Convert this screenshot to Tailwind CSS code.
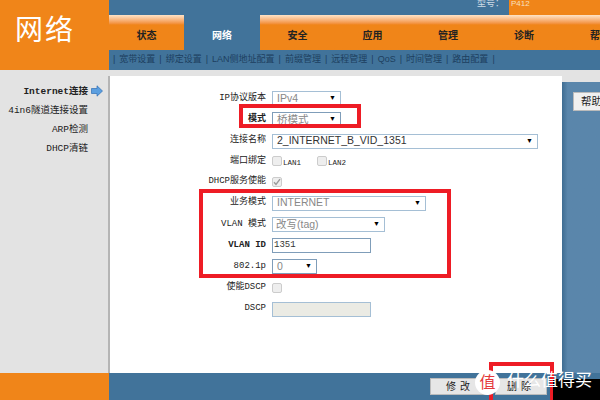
<!DOCTYPE html>
<html lang="zh">
  <head>
    <meta charset="UTF-8" />
    <title>网络</title>
    <script src="https://cdn.jsdelivr.net/npm/@tailwindcss/browser@4"></script>
  </head>
  <body class="relative w-[600px] h-[400px] overflow-hidden bg-white font-['Liberation_Sans','Noto_Sans_CJK_SC',sans-serif] text-[9px] text-[#222]">
    <!-- header -->
    <div class="flex h-[70px]">
      <div class="w-[109px] shrink-0 bg-[#f08519] text-white text-[28px] pl-[15px] pt-[13px] leading-[36px] tracking-[2px]">网络</div>
      <div class="w-[491px] overflow-hidden flex flex-col bg-[#41739a]">
        <div class="h-[15px] flex justify-end">
          <div class="text-[#cfdbe5] text-[9px] leading-[7px] pr-[5px]">型号：</div>
          <div class="w-[91px] bg-[#f08519] text-[#f8e0c0] text-[8px] leading-[7px] pl-[2px]">P412</div>
        </div>
        <div class="h-[35px] flex font-bold text-[10px] text-[#222]">
          <div class="w-[75px] shrink-0 bg-linear-to-b from-[#fde3c6] from-0% via-[#f08519] via-28% to-[#f08519] flex items-center justify-center pt-[6px]">状态</div>
          <div class="w-[76px] shrink-0 text-white flex items-center justify-center pt-[6px]">网络</div>
          <div class="w-[400px] shrink-0 flex bg-linear-to-b from-[#fde3c6] from-0% via-[#f08519] via-28% to-[#f08519]">
            <div class="w-[75px] flex items-center justify-center pt-[6px]">安全</div>
            <div class="w-[75px] flex items-center justify-center pt-[6px]">应用</div>
            <div class="w-[76px] flex items-center justify-center pt-[6px]">管理</div>
            <div class="w-[76px] flex items-center justify-center pt-[6px]">诊断</div>
            <div class="pl-[28px] flex items-center pt-[6px] whitespace-nowrap">帮助</div>
          </div>
        </div>
        <div class="h-[19px] flex items-center gap-[4px] pl-[4px] text-[9px] text-[#1d3f5f] whitespace-nowrap">
          <span>|</span><span>宽带设置</span><span>|</span><span>绑定设置</span><span>|</span><span>LAN侧地址配置</span><span>|</span><span>前缀管理</span><span>|</span><span>远程管理</span><span>|</span><span>QoS</span><span>|</span><span>时间管理</span><span>|</span><span>路由配置</span><span>|</span>
        </div>
      </div>
    </div>

    <div class="flex h-[303px] bg-[#e3e3e3] pt-[6px]">
      <!-- sidebar -->
      <div class="w-[110px] shrink-0 relative flex flex-col items-end pr-[20px] pt-[8px] gap-[4px] leading-[15px] text-[9.5px] font-['Liberation_Mono','Noto_Sans_CJK_SC',monospace] text-[#222] whitespace-nowrap border-r-2 border-[#b5b5b5]">
        <div class="font-bold">Internet连接</div>
        <div>4in6隧道连接设置</div>
        <div>ARP检测</div>
        <div>DHCP清链</div>
        <svg class="absolute right-[5px] top-[9px]" width="12" height="12" viewBox="0 0 12 12"><path d="M0.5 3.5H6V0.8L11.5 6L6 11.2V8.5H0.5Z" fill="#5b9fe0" stroke="#2f6fb5" stroke-width="0.7"/></svg>
      </div>

      <!-- form -->
      <div class="w-[452px] shrink-0 bg-white">
        <div class="flex flex-col pl-[34px] pt-[12px] font-['Liberation_Mono','Noto_Sans_CJK_SC',monospace]">
          <div class="flex items-center h-[21px]">
            <div class="w-[128px] text-right pr-[6px]">IP协议版本</div>
            <div class="w-[69px] h-[15px] flex items-center justify-between px-[4px] border border-[#a5bfd5] text-[#888] text-[10.5px] font-['Liberation_Sans','Noto_Sans_CJK_SC',sans-serif]">IPv4<span class="text-[7px] text-black">▼</span></div>
          </div>
          <div class="flex items-center h-[21px]">
            <div class="w-[128px] text-right pr-[6px] font-bold">模式</div>
            <div class="w-[69px] h-[15px] flex items-center justify-between px-[4px] border border-[#7f9db9] text-[#888] text-[10.5px] font-['Liberation_Sans','Noto_Sans_CJK_SC',sans-serif]">桥模式<span class="text-[7px] text-black">▼</span></div>
          </div>
          <div class="flex items-center h-[22px]">
            <div class="w-[128px] text-right pr-[6px]">连接名称</div>
            <div class="w-[266px] h-[15px] shrink-0 flex items-center justify-between px-[4px] border border-[#a5bfd5] text-[#333] text-[10.5px] font-['Liberation_Sans','Noto_Sans_CJK_SC',sans-serif]">2_INTERNET_B_VID_1351<span class="text-[7px] text-black">▼</span></div>
          </div>
          <div class="flex items-center h-[20px]">
            <div class="w-[128px] text-right pr-[6px]">端口绑定</div>
            <div class="w-[10px] h-[10px] -mt-[3px] rounded-[2px] border border-[#ccc] bg-[#eee]"></div>
            <div class="w-[35px] text-[7.5px] pt-[4px] pl-[1px]">LAN1</div>
            <div class="w-[10px] h-[10px] -mt-[3px] rounded-[2px] border border-[#ccc] bg-[#eee]"></div>
            <div class="text-[7.5px] pt-[4px] pl-[1px]">LAN2</div>
          </div>
          <div class="flex items-center h-[20px]">
            <div class="w-[128px] text-right pr-[6px]">DHCP服务使能</div>
            <div class="w-[10px] h-[10px] rounded-[2px] border border-[#ccc] bg-[#eee] flex items-center justify-center">
              <svg width="8" height="8" viewBox="0 0 8 8"><path d="M1 4.2L3 6.5L7 1.2" fill="none" stroke="#999" stroke-width="1.4"/></svg>
            </div>
          </div>
          <div class="flex items-center h-[22px]">
            <div class="w-[128px] text-right pr-[6px]">业务模式</div>
            <div class="w-[154px] h-[15px] flex items-center justify-between px-[4px] border border-[#a5bfd5] text-[#888] text-[10.5px] font-['Liberation_Sans','Noto_Sans_CJK_SC',sans-serif]">INTERNET<span class="text-[7px] text-black">▼</span></div>
          </div>
          <div class="flex items-center h-[21px]">
            <div class="w-[128px] text-right pr-[6px]">VLAN 模式</div>
            <div class="w-[113px] h-[15px] flex items-center justify-between px-[3px] pr-[4px] border border-[#a5bfd5] text-[#888] text-[10.5px] font-['Liberation_Sans','Noto_Sans_CJK_SC',sans-serif]">改写(tag)<span class="text-[7px] text-black">▼</span></div>
          </div>
          <div class="flex items-center h-[21px]">
            <div class="w-[128px] text-right pr-[6px] font-bold">VLAN ID</div>
            <div class="w-[99px] h-[15px] flex items-center px-[1px] border border-[#7f9db9] text-[#333] text-[9px]">1351</div>
          </div>
          <div class="flex items-center h-[21px]">
            <div class="w-[128px] text-right pr-[6px]">802.1p</div>
            <div class="w-[45px] h-[15px] flex items-center justify-between px-[4px] border border-[#7f9db9] text-[#888] text-[10.5px] font-['Liberation_Sans','Noto_Sans_CJK_SC',sans-serif]">0<span class="text-[7px] text-black">▼</span></div>
          </div>
          <div class="flex items-center h-[21px]">
            <div class="w-[128px] text-right pr-[6px]">使能DSCP</div>
            <div class="w-[10px] h-[10px] rounded-[2px] border border-[#ccc] bg-[#eee]"></div>
          </div>
          <div class="flex items-center h-[22px]">
            <div class="w-[128px] text-right pr-[6px]">DSCP</div>
            <div class="w-[99px] h-[15px] border border-[#a5bfd5] bg-[#ebebe4]"></div>
          </div>
        </div>
      </div>

      <!-- right panel -->
      <div class="w-[38px] shrink-0 overflow-hidden mt-[6px] bg-linear-to-r from-[#3f6d92] from-0% via-[#5a86ab] via-15% to-[#5a86ab] pl-[11px] pt-[10px]">
        <div class="w-[60px] h-[19px] bg-[#f0f0f0] border border-[#bbb] text-[10.5px] leading-[17px] pl-[7px] whitespace-nowrap">帮助</div>
      </div>
    </div>

    <!-- footer -->
    <div class="flex h-[27px]">
      <div class="w-[109px] bg-[#f08519]"></div>
      <div class="flex-1 bg-[#41739a] flex justify-end items-start pt-[5px] pr-[53px] gap-[5px]">
        <div class="w-[60px] h-[17px] bg-[#e6e6e6] border border-[#bbb] text-[10px] leading-[15px] text-center tracking-[4px]">修改</div>
        <div class="w-[52px] h-[17px] bg-[#e6e6e6] border border-[#bbb] text-[10px] leading-[15px] text-center tracking-[4px]">删除</div>
      </div>
    </div>

    <!-- red annotation boxes -->
    <div class="absolute left-[239px] top-[104px] w-[122px] h-[24px] border-[4px] border-[#ee1c25]"></div>
    <div class="absolute left-[199px] top-[189px] w-[252px] h-[89px] border-[4px] border-[#ee1c25]"></div>
    <div class="absolute left-[489px] top-[362px] w-[65px] h-[42px] border-[4px] border-[#ee1c25]"></div>

    <!-- watermark -->
    <div class="absolute left-[553px] top-[379px] w-[47px] h-[21px] bg-black"></div>
    <div class="absolute left-[475px] top-[370px] w-[25px] h-[25px] rounded-full bg-white text-[#e4393c] text-[16px] leading-[25px] text-center">值</div>
    <div class="absolute left-[507px] top-[371px] text-white text-[17px] leading-[20px] whitespace-nowrap">什么值得买</div>
  </body>
</html>
